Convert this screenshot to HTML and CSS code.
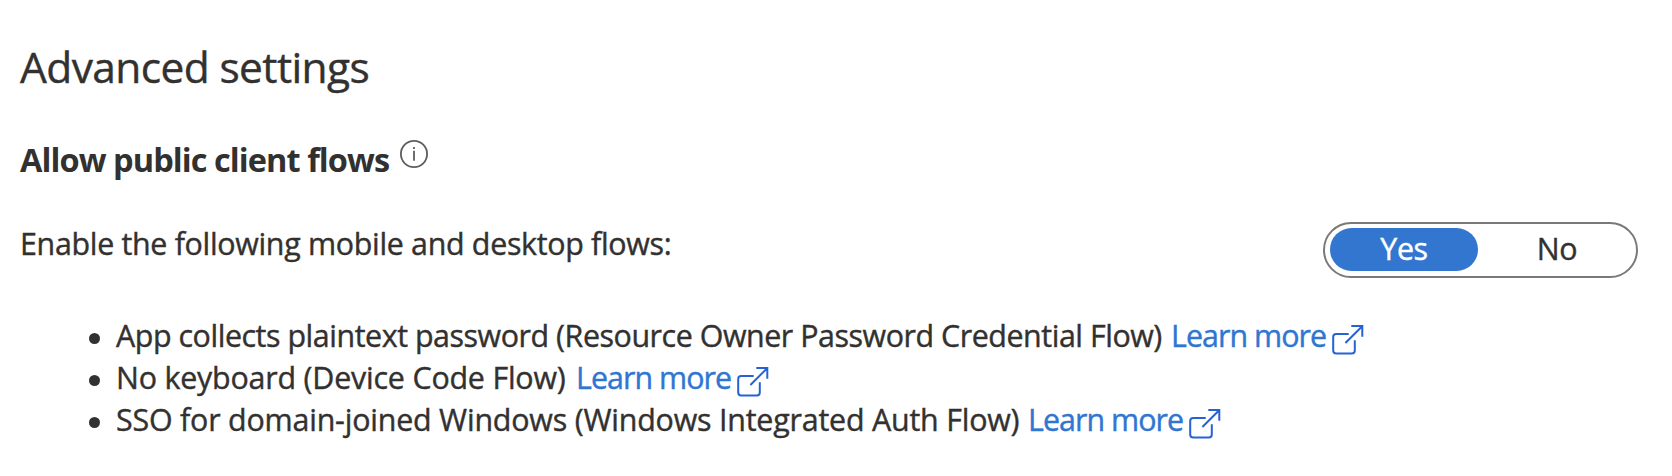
FILE: index.html
```
<!DOCTYPE html>
<html lang="en">
<head>
<meta charset="utf-8">
<title>Advanced settings</title>
<link rel="stylesheet" href="styles.css">
</head>
<body>
<svg class="sprite" aria-hidden="true">
  <symbol id="external" viewBox="0 0 33 31">
    <path d="M17.7 10H5.2a3 3 0 0 0-3 3v13.6a3 3 0 0 0 3 3h15.6a3 3 0 0 0 3-3V16.2M14.4 19 31.2 2.2M20.3 2H31.3V12.8"/>
  </symbol>
</svg>
<main class="settings">
  <h1 class="title"><span>Advanced settings</span></h1>
  <h2 class="subtitle"><span class="subtitle-text">Allow public client flows</span>
    <svg class="info" viewBox="0 0 28 28"><circle cx="14" cy="14" r="13.1"/><path d="M14 10.8V20.8M14 7.1V9"/></svg>
  </h2>
  <div class="row">
    <p class="lead">Enable the following mobile and desktop flows:</p>
    <div class="toggle">
      <span class="option selected">Yes</span>
      <span class="option other">No</span>
    </div>
  </div>
  <ul class="flows">
    <li class="flow"><span class="flow-password">App collects plaintext password (Resource Owner Password Credential Flow)</span><a class="link">Learn more</a><svg class="external"><use href="#external"/></svg></li>
    <li class="flow"><span class="flow-device">No keyboard (Device Code Flow)</span><a class="link">Learn more</a><svg class="external"><use href="#external"/></svg></li>
    <li class="flow"><span class="flow-windows">SSO for domain-joined Windows (Windows Integrated Auth Flow)</span><a class="link">Learn more</a><svg class="external"><use href="#external"/></svg></li>
  </ul>
</main>
</body>
</html>
```
FILE: styles.css
```
* { box-sizing: border-box; margin: 0; padding: 0; }
body {
  background: #fff;
  color: #323130;
  font: 400 30.4px/42px "Open Sans", "Noto Sans", sans-serif;
  white-space: nowrap;
  -webkit-text-stroke: 0.4px currentColor;
}
.sprite { display: none; }
.settings { padding: 37px 34px 0 20px; }
.title { font-size: 42.5px; font-weight: 400; line-height: 60px; letter-spacing: -0.62px; }
.subtitle {
  display: flex;
  margin-top: 41px;
  font-size: 32.5px;
  font-weight: 700;
  line-height: 43px;
  letter-spacing: -0.93px;
  -webkit-text-stroke: 0;
}
.subtitle-text { width: 380px; }
.info { width: 28px; height: 28px; margin-top: 1.5px; fill: none; stroke: #605e5c; stroke-width: 1.8; }
.row { display: flex; justify-content: space-between; margin-top: 41px; height: 56px; }
.lead { padding-top: 1px; letter-spacing: -0.31px; }
.toggle {
  display: flex;
  width: 315px;
  height: 56px;
  padding: 4px 5px;
  border: 2px solid #7a7978;
  border-radius: 28px;
}
.option { width: 148px; height: 43px; flex: none; line-height: 42px; text-align: center; border-radius: 22px; letter-spacing: -0.4px; }
.other { width: 158px; }
.selected { background: #3276cf; color: #fff; }
.flows { list-style: none; margin-top: 37px; padding-left: 69px; }
.flow { display: flex; height: 42px; align-items: flex-start; }
.flow::before { content: ""; width: 11px; height: 11px; margin: 18px 16px 0 0; border-radius: 50%; background: #323130; flex: none; }
.flow-password { width: 1055px; letter-spacing: -0.45px; }
.flow-device { width: 460px; letter-spacing: -0.2px; }
.flow-windows { width: 912px; letter-spacing: -0.2px; }
.link { width: 160px; color: #2f76d2; letter-spacing: -0.95px; }
.external { width: 33px; height: 31px; margin-top: 9px; fill: none; stroke: #2662d4; stroke-width: 2; flex: none; }
```
